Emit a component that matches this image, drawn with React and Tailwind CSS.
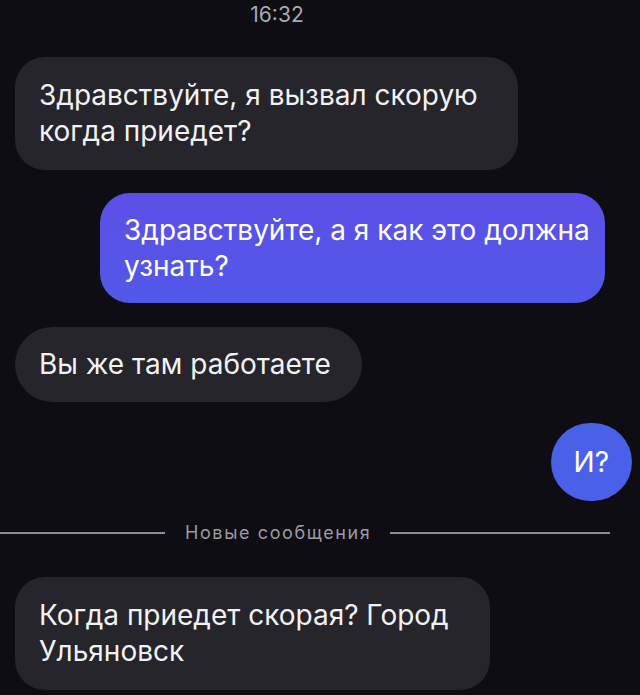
import React from 'react';

const LEFT = 'bg-[#25252b] text-[#f2f2f4] text-[28px] leading-[36px] rounded-[30px] pl-6';
const RIGHT = 'text-white text-[28px] leading-[36px] rounded-[30px]';

export default function App() {
  return (
    <div className="w-[640px] h-[695px] overflow-hidden bg-[#0d0d13] font-['Inter','Roboto',sans-serif]">
      <div className="pt-[2px] pr-[86px] text-center text-[21px] leading-[26px] text-[#a9a9b0]">16:32</div>

      <div className="flex flex-col items-start mt-[29px]">
        <div className={`${LEFT} w-[503px] ml-[15px] pt-5 pb-[21px]`}>
          Здравствуйте, я вызвал скорую
          <br />
          когда приедет?
        </div>

        <div
          className={`${RIGHT} w-[505px] self-end mr-[35px] mt-[23px] pl-6 pt-[19px] pb-[19px] bg-gradient-to-b from-[#5d4fe7] to-[#5158e8]`}
        >
          Здравствуйте, а я как это должна
          <br />
          узнать?
        </div>

        <div className={`${LEFT} w-[347px] ml-[15px] mt-[24px] pt-[19px] pb-[20px] rounded-full`}>
          Вы же там работаете
        </div>

        <div className={`${RIGHT} self-end mr-[8px] mt-[21px] px-[23px] py-[21px] rounded-full bg-[#4b60e9]`}>И?</div>

        <div className="flex items-center self-stretch mt-[20px] pr-[30px]">
          <div className="w-[165px] h-[2px] bg-[#8c8c93]" />
          <div className="pl-[20px] pr-[19px] text-[18px] leading-[24px] tracking-[1.6px] text-[#9b9ba2]">
            Новые сообщения
          </div>
          <div className="flex-1 h-[2px] bg-[#8c8c93]" />
        </div>

        <div className={`${LEFT} w-[475px] ml-[15px] mt-[32px] pt-5 pb-[21px]`}>
          Когда приедет скорая? Город
          <br />
          Ульяновск
        </div>
      </div>
    </div>
  );
}
